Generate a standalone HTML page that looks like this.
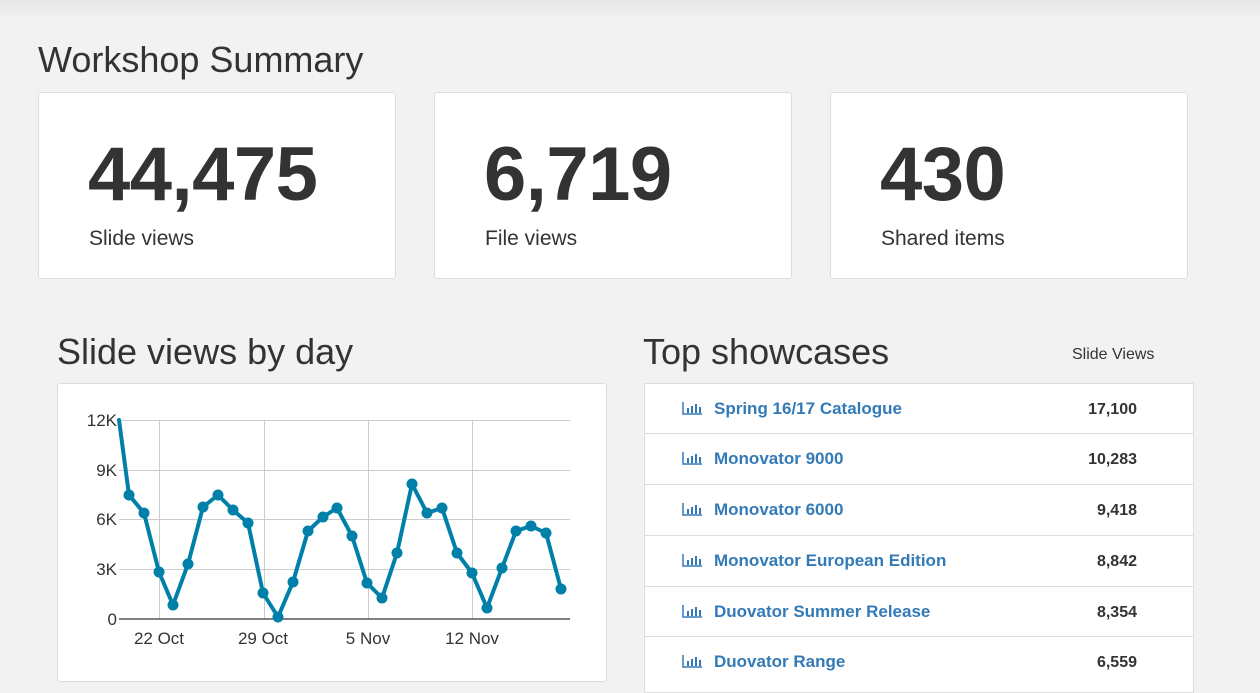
<!DOCTYPE html>
<html><head><meta charset="utf-8"><style>
*{margin:0;padding:0;box-sizing:border-box}
body{width:1260px;height:689px;overflow:hidden;background:#f2f2f2;font-family:"Liberation Sans",sans-serif;color:#333;position:relative}
.top{position:absolute;left:0;top:0;width:1260px;height:20px;background:linear-gradient(#e6e6e6,#f2f2f2)}
.a{position:absolute;white-space:nowrap}
.card{position:absolute;background:#fff;border:1px solid #ddd;border-radius:3px}
.h{font-size:36px;color:#333}
.big{font-size:76px;font-weight:bold;color:#333;letter-spacing:-0.5px}
.lbl{font-size:21px}
.row{position:absolute;left:0;width:549px;height:51px;border-top:1px solid #ddd}
.row .n{position:absolute;left:69px;top:15px;font-size:17px;font-weight:bold;color:#337ab7}
.row .v{position:absolute;right:57px;top:17px;font-size:16px;font-weight:bold;color:#333}
.row svg{position:absolute;left:37px;top:18px}
</style></head><body>
<div class="top"></div>
<div class="a h" style="left:38px;top:39px">Workshop Summary</div>

<div class="card" style="left:38px;top:92px;width:358px;height:187px"></div>
<div class="card" style="left:434px;top:92px;width:358px;height:187px"></div>
<div class="card" style="left:830px;top:92px;width:358px;height:187px"></div>
<div class="a big" style="left:88px;top:131px">44,475</div>
<div class="a big" style="left:484px;top:131px">6,719</div>
<div class="a big" style="left:880px;top:131px">430</div>
<div class="a lbl" style="left:89px;top:227px">Slide views</div>
<div class="a lbl" style="left:485px;top:227px">File views</div>
<div class="a lbl" style="left:881px;top:227px">Shared items</div>

<div class="a h" style="left:57px;top:331px">Slide views by day</div>
<div class="card" style="left:57px;top:383px;width:550px;height:299px"></div>
<svg class="a" style="left:0;top:0" width="1260" height="689">
<g stroke="#ccc" stroke-width="1">
<line x1="119" y1="420.5" x2="570" y2="420.5"/><line x1="119" y1="470.5" x2="570" y2="470.5"/>
<line x1="119" y1="519.5" x2="570" y2="519.5"/><line x1="119" y1="569.5" x2="570" y2="569.5"/>
<line x1="159.5" y1="420" x2="159.5" y2="619"/><line x1="264.5" y1="420" x2="264.5" y2="619"/>
<line x1="368.5" y1="420" x2="368.5" y2="619"/><line x1="472.5" y1="420" x2="472.5" y2="619"/>
</g>
<line x1="119" y1="619" x2="570" y2="619" stroke="#555" stroke-width="1.5"/>
<g font-size="17" fill="#333" font-family="Liberation Sans,sans-serif">
<text x="117" y="426" text-anchor="end">12K</text><text x="117" y="476" text-anchor="end">9K</text>
<text x="117" y="525" text-anchor="end">6K</text><text x="117" y="575" text-anchor="end">3K</text>
<text x="117" y="625" text-anchor="end">0</text>
<text x="159" y="644" text-anchor="middle">22 Oct</text><text x="263" y="644" text-anchor="middle">29 Oct</text>
<text x="368" y="644" text-anchor="middle">5 Nov</text><text x="472" y="644" text-anchor="middle">12 Nov</text>
</g>
<polyline fill="none" stroke="#0080a8" stroke-width="4" stroke-linejoin="round" stroke-linecap="round" points="119,420 129,495 144,513 159,572 173,605 188,564 203,507 218,495 233,510 248,523 263,593 278,617 293,582 308,531 323,517 337,508 352,536 367,583 382,598 397,553 412,484 427,513 442,508 457,553 472,573 487,608 502,568 516,531 531,526 546,533 561,589"/>
<g fill="#0080a8">
<circle cx="129" cy="495" r="5.5"/><circle cx="144" cy="513" r="5.5"/><circle cx="159" cy="572" r="5.5"/><circle cx="173" cy="605" r="5.5"/><circle cx="188" cy="564" r="5.5"/><circle cx="203" cy="507" r="5.5"/><circle cx="218" cy="495" r="5.5"/><circle cx="233" cy="510" r="5.5"/><circle cx="248" cy="523" r="5.5"/><circle cx="263" cy="593" r="5.5"/><circle cx="278" cy="617" r="5.5"/><circle cx="293" cy="582" r="5.5"/><circle cx="308" cy="531" r="5.5"/><circle cx="323" cy="517" r="5.5"/><circle cx="337" cy="508" r="5.5"/><circle cx="352" cy="536" r="5.5"/><circle cx="367" cy="583" r="5.5"/><circle cx="382" cy="598" r="5.5"/><circle cx="397" cy="553" r="5.5"/><circle cx="412" cy="484" r="5.5"/><circle cx="427" cy="513" r="5.5"/><circle cx="442" cy="508" r="5.5"/><circle cx="457" cy="553" r="5.5"/><circle cx="472" cy="573" r="5.5"/><circle cx="487" cy="608" r="5.5"/><circle cx="502" cy="568" r="5.5"/><circle cx="516" cy="531" r="5.5"/><circle cx="531" cy="526" r="5.5"/><circle cx="546" cy="533" r="5.5"/><circle cx="561" cy="589" r="5.5"/>
</g>
</svg>

<div class="a h" style="left:643px;top:331px">Top showcases</div>
<div class="a" style="left:1072px;top:346px;font-size:16px">Slide Views</div>
<div style="position:absolute;left:644px;top:383px;width:550px;height:310px;background:#fff;border:1px solid #ddd;overflow:hidden">
<div class="row" style="top:-1px"><svg width="20" height="13" viewBox="0 0 20 13"><path d="M1 0V12H20" stroke="#337ab7" stroke-width="1.5" fill="none"/><rect x="5" y="6" width="2" height="5" fill="#337ab7"/><rect x="9" y="4" width="2" height="7" fill="#337ab7"/><rect x="13" y="2" width="2" height="9" fill="#337ab7"/><rect x="17" y="5" width="2" height="6" fill="#337ab7"/></svg><span class="n">Spring 16/17 Catalogue</span><span class="v">17,100</span></div>
<div class="row" style="top:49px"><svg width="20" height="13" viewBox="0 0 20 13"><path d="M1 0V12H20" stroke="#337ab7" stroke-width="1.5" fill="none"/><rect x="5" y="6" width="2" height="5" fill="#337ab7"/><rect x="9" y="4" width="2" height="7" fill="#337ab7"/><rect x="13" y="2" width="2" height="9" fill="#337ab7"/><rect x="17" y="5" width="2" height="6" fill="#337ab7"/></svg><span class="n">Monovator 9000</span><span class="v">10,283</span></div>
<div class="row" style="top:100px"><svg width="20" height="13" viewBox="0 0 20 13"><path d="M1 0V12H20" stroke="#337ab7" stroke-width="1.5" fill="none"/><rect x="5" y="6" width="2" height="5" fill="#337ab7"/><rect x="9" y="4" width="2" height="7" fill="#337ab7"/><rect x="13" y="2" width="2" height="9" fill="#337ab7"/><rect x="17" y="5" width="2" height="6" fill="#337ab7"/></svg><span class="n">Monovator 6000</span><span class="v">9,418</span></div>
<div class="row" style="top:151px"><svg width="20" height="13" viewBox="0 0 20 13"><path d="M1 0V12H20" stroke="#337ab7" stroke-width="1.5" fill="none"/><rect x="5" y="6" width="2" height="5" fill="#337ab7"/><rect x="9" y="4" width="2" height="7" fill="#337ab7"/><rect x="13" y="2" width="2" height="9" fill="#337ab7"/><rect x="17" y="5" width="2" height="6" fill="#337ab7"/></svg><span class="n">Monovator European Edition</span><span class="v">8,842</span></div>
<div class="row" style="top:202px"><svg width="20" height="13" viewBox="0 0 20 13"><path d="M1 0V12H20" stroke="#337ab7" stroke-width="1.5" fill="none"/><rect x="5" y="6" width="2" height="5" fill="#337ab7"/><rect x="9" y="4" width="2" height="7" fill="#337ab7"/><rect x="13" y="2" width="2" height="9" fill="#337ab7"/><rect x="17" y="5" width="2" height="6" fill="#337ab7"/></svg><span class="n">Duovator Summer Release</span><span class="v">8,354</span></div>
<div class="row" style="top:252px"><svg width="20" height="13" viewBox="0 0 20 13"><path d="M1 0V12H20" stroke="#337ab7" stroke-width="1.5" fill="none"/><rect x="5" y="6" width="2" height="5" fill="#337ab7"/><rect x="9" y="4" width="2" height="7" fill="#337ab7"/><rect x="13" y="2" width="2" height="9" fill="#337ab7"/><rect x="17" y="5" width="2" height="6" fill="#337ab7"/></svg><span class="n">Duovator Range</span><span class="v">6,559</span></div>
</div>
</body></html>
